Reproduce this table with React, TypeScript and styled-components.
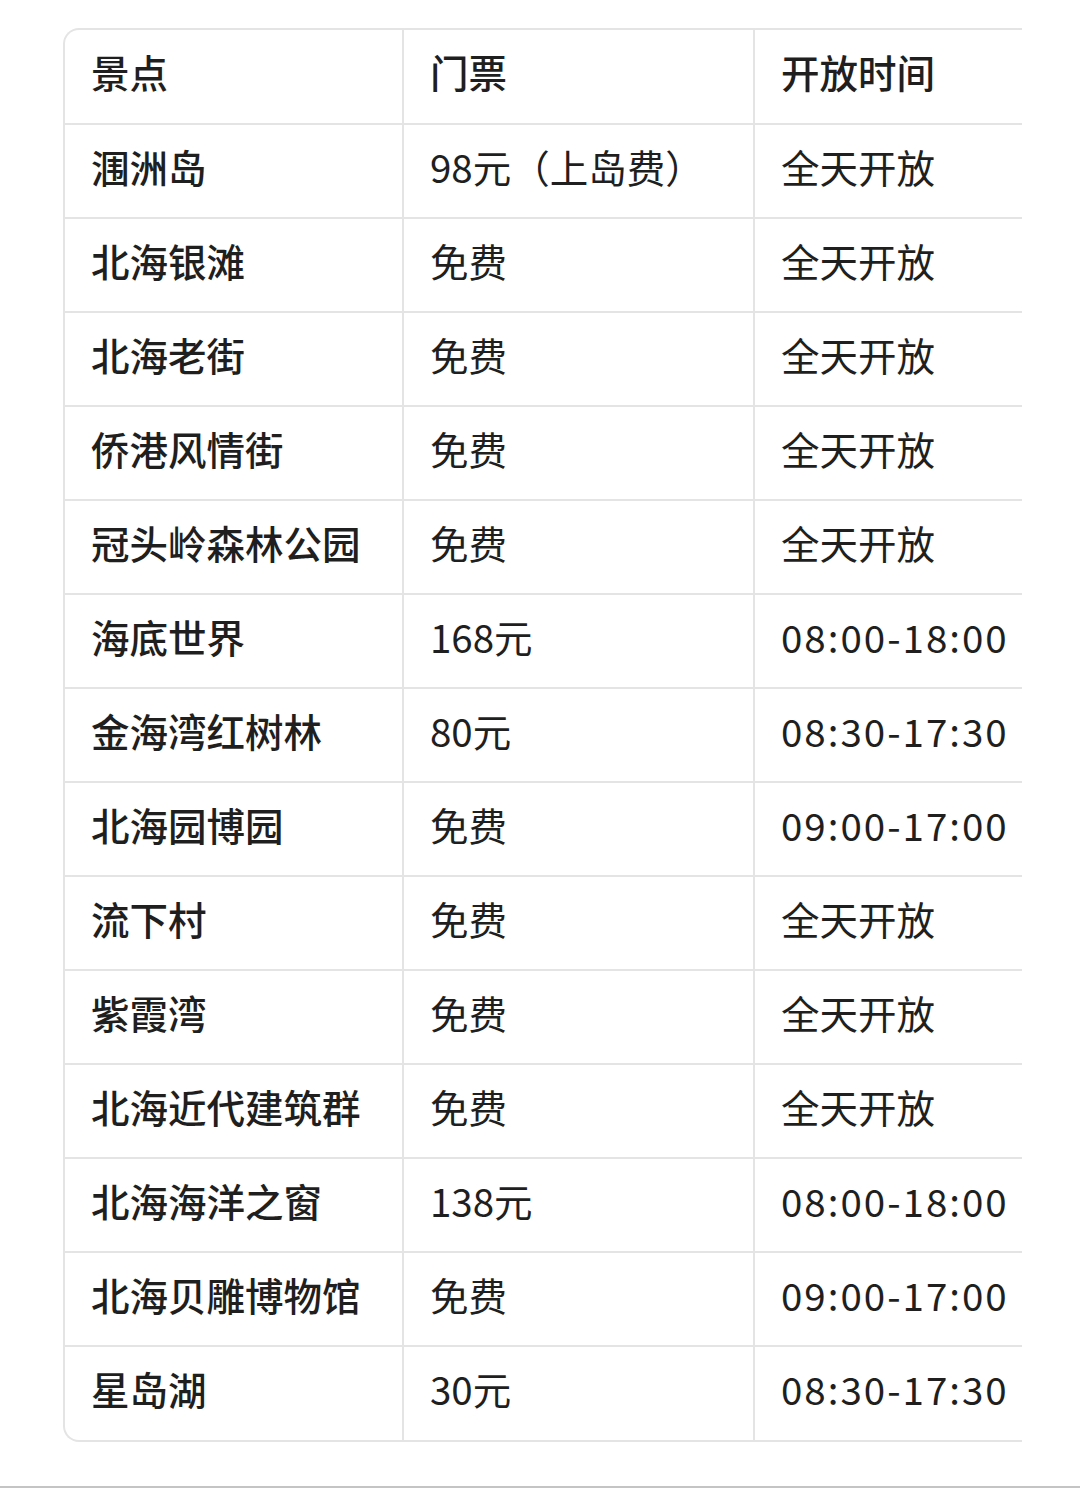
import React from "react";
import styled, { createGlobalStyle } from "styled-components";

const Global = createGlobalStyle`
  html, body { margin: 0; padding: 0; background: #ffffff; }
  body { font-family: "Noto Sans CJK SC", "Noto Sans", sans-serif; color: #1f1f1f; }
`;

const Page = styled.div`
  width: 1080px;
  height: 1488px;
  display: flex;
  flex-direction: column;
  box-sizing: border-box;
`;

const Scroller = styled.div`
  margin: 28px 58px 0 63px;
  overflow: hidden;
  border: 2px solid #e4e4e4;
  border-right: none;
  border-radius: 16px 0 0 16px;
`;

const Table = styled.table`
  border-collapse: collapse;
  width: 1200px;
  table-layout: fixed;
`;

const Row = styled.tr`
  height: 94px;
  & + & > * { border-top: 2px solid #e4e4e4; }
`;

const Cell = styled.td<{ $strong?: boolean; $time?: boolean }>`
  padding: 0 0 10px 26px;
  font-size: 38.5px;
  line-height: 1;
  font-weight: ${(p) => (p.$strong ? 500 : 400)};
  letter-spacing: ${(p) => (p.$time ? "2px" : "0")};
  color: #1f1f1f;
  white-space: nowrap;
  vertical-align: middle;
  & + & { border-left: 2px solid #e4e4e4; }
`;

const Col = styled.col<{ $w: number }>`
  width: ${(p) => p.$w}px;
`;

const BottomRule = styled.div`
  margin-top: auto;
  height: 2px;
  background: #c4c4c4;
`;

const rows: [string, string, string][] = [
  ["涠洲岛", "98元（上岛费）", "全天开放"],
  ["北海银滩", "免费", "全天开放"],
  ["北海老街", "免费", "全天开放"],
  ["侨港风情街", "免费", "全天开放"],
  ["冠头岭森林公园", "免费", "全天开放"],
  ["海底世界", "168元", "08:00-18:00"],
  ["金海湾红树林", "80元", "08:30-17:30"],
  ["北海园博园", "免费", "09:00-17:00"],
  ["流下村", "免费", "全天开放"],
  ["紫霞湾", "免费", "全天开放"],
  ["北海近代建筑群", "免费", "全天开放"],
  ["北海海洋之窗", "138元", "08:00-18:00"],
  ["北海贝雕博物馆", "免费", "09:00-17:00"],
  ["星岛湖", "30元", "08:30-17:30"],
];

export default function App() {
  return (
    <>
      <Global />
      <Page>
        <Scroller>
          <Table>
            <colgroup>
              <Col $w={338} />
              <Col $w={351} />
              <Col $w={511} />
            </colgroup>
            <tbody>
              <Row>
                <Cell $strong>景点</Cell>
                <Cell $strong>门票</Cell>
                <Cell $strong>开放时间</Cell>
              </Row>
              {rows.map((r) => (
                <Row key={r[0]}>
                  <Cell $strong>{r[0]}</Cell>
                  <Cell>{r[1]}</Cell>
                  <Cell $time={/\d/.test(r[2])}>{r[2]}</Cell>
                </Row>
              ))}
            </tbody>
          </Table>
        </Scroller>
        <BottomRule />
      </Page>
    </>
  );
}
